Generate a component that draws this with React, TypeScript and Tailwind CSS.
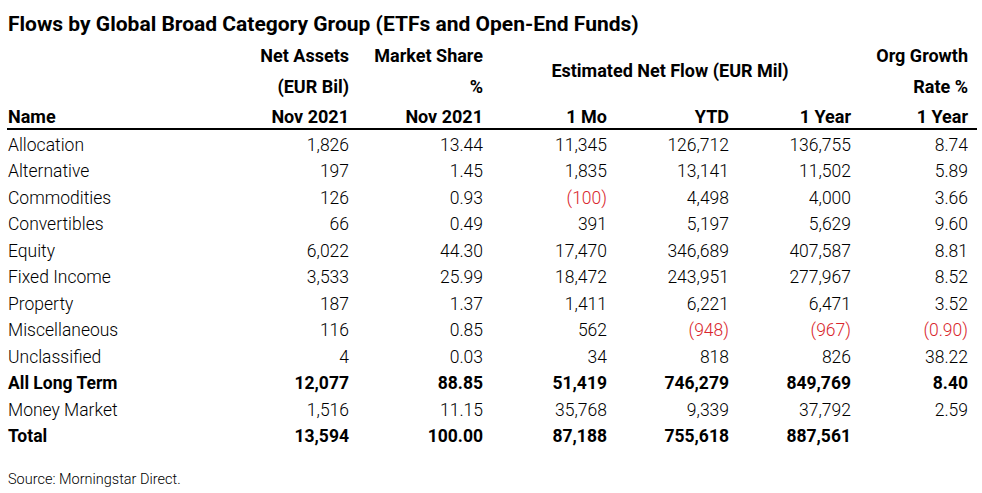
import React from "react";

type Row = {
  name: string;
  bold?: boolean;
  cells: string[];
};

const rows: Row[] = [
  { name: "Allocation", cells: ["1,826", "13.44", "11,345", "126,712", "136,755", "8.74"] },
  { name: "Alternative", cells: ["197", "1.45", "1,835", "13,141", "11,502", "5.89"] },
  { name: "Commodities", cells: ["126", "0.93", "(100)", "4,498", "4,000", "3.66"] },
  { name: "Convertibles", cells: ["66", "0.49", "391", "5,197", "5,629", "9.60"] },
  { name: "Equity", cells: ["6,022", "44.30", "17,470", "346,689", "407,587", "8.81"] },
  { name: "Fixed Income", cells: ["3,533", "25.99", "18,472", "243,951", "277,967", "8.52"] },
  { name: "Property", cells: ["187", "1.37", "1,411", "6,221", "6,471", "3.52"] },
  { name: "Miscellaneous", cells: ["116", "0.85", "562", "(948)", "(967)", "(0.90)"] },
  { name: "Unclassified", cells: ["4", "0.03", "34", "818", "826", "38.22"] },
  { name: "All Long Term", bold: true, cells: ["12,077", "88.85", "51,419", "746,279", "849,769", "8.40"] },
  { name: "Money Market", cells: ["1,516", "11.15", "35,768", "9,339", "37,792", "2.59"] },
  { name: "Total", bold: true, cells: ["13,594", "100.00", "87,188", "755,618", "887,561", ""] },
];

const cols = "grid grid-cols-[240px_102px_134px_124px_122px_122px_117px_9px]";

export default function App() {
  return (
    <div className="h-[493px] w-[982px] overflow-hidden bg-white font-['Roboto','Liberation_Sans',sans-serif] text-black">
      <h1 className="pl-[8px] pt-[11px] text-[21px] font-bold leading-[26px]">
        Flows by Global Broad Category Group (ETFs and Open-End Funds)
      </h1>

      <div className="ml-[7px] mt-[7.5px] w-[970px]">
        {/* header */}
        <div className={`${cols} grid-rows-[31px_30px_22px] whitespace-nowrap border-b-2 border-black text-[18px] font-bold leading-[22px]`}>
          <div className="col-start-2 row-start-1 text-right">Net Assets</div>
          <div className="col-start-3 row-start-1 text-right">Market Share</div>
          <div className="col-span-3 col-start-4 row-span-2 row-start-1 flex justify-center pt-[15px] pl-[6px]">
            Estimated Net Flow (EUR Mil)
          </div>
          <div className="col-start-7 row-start-1 text-right">Org Growth</div>

          <div className="col-start-2 row-start-2 text-right">(EUR Bil)</div>
          <div className="col-start-3 row-start-2 text-right">%</div>
          <div className="col-start-7 row-start-2 text-right">Rate %</div>

          <div className="col-start-1 row-start-3 pl-[1px]">Name</div>
          <div className="col-start-2 row-start-3 text-right">Nov 2021</div>
          <div className="col-start-3 row-start-3 text-right">Nov 2021</div>
          <div className="col-start-4 row-start-3 text-right">1 Mo</div>
          <div className="col-start-5 row-start-3 text-right">YTD</div>
          <div className="col-start-6 row-start-3 text-right">1 Year</div>
          <div className="col-start-7 row-start-3 text-right">1 Year</div>
        </div>

        {/* body */}
        <div className="pt-[2px] text-[17.5px] leading-[26.5px]">
          {rows.map((row) => (
            <div key={row.name} className={`${cols} ${row.bold ? "font-bold" : "font-light"}`}>
              <div className="pl-[1px]">{row.name}</div>
              {row.cells.map((cell, i) => (
                <div
                  key={i}
                  className={`text-right ${cell.startsWith("(") ? "text-[#d9262d]" : ""}`}
                >
                  {cell}
                </div>
              ))}
              <div />
            </div>
          ))}
        </div>
      </div>

      <p className="mt-[20.5px] pl-[8px] text-[14.5px] font-light leading-[20px]">Source: Morningstar Direct.</p>
    </div>
  );
}
